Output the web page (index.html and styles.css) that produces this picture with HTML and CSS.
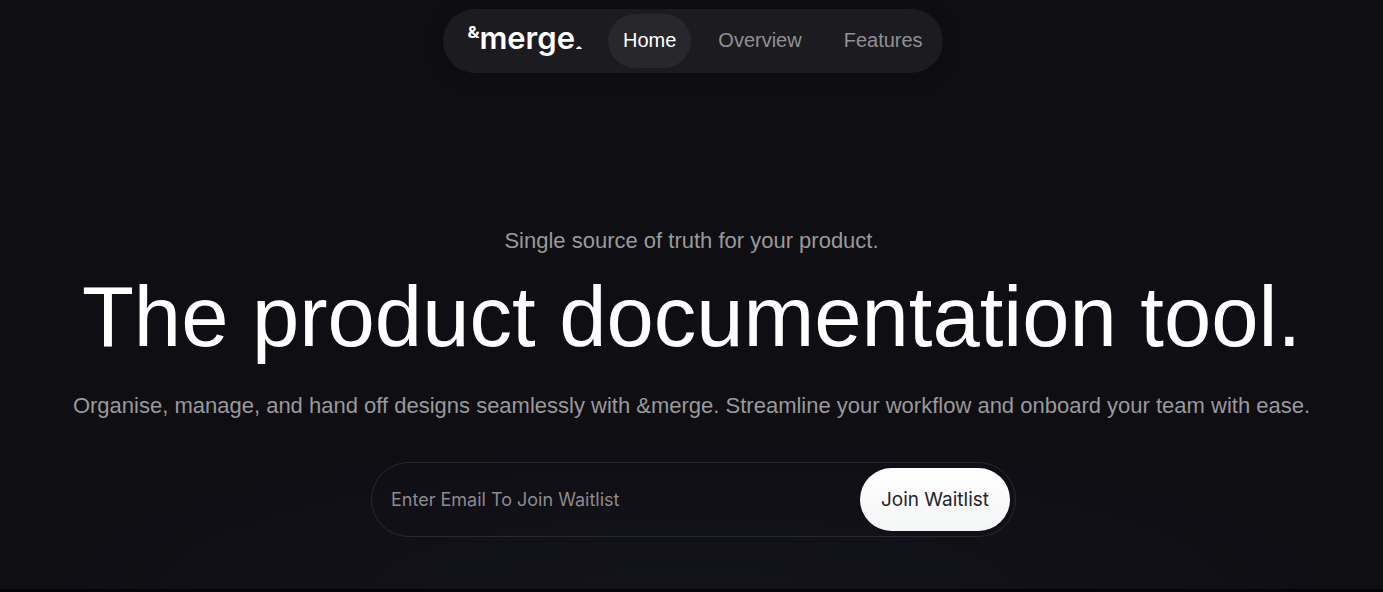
FILE: index.html
```html
<!DOCTYPE html>
<html lang="en">
<head>
<meta charset="utf-8">
<meta name="viewport" content="width=device-width, initial-scale=1">
<title>&amp;merge</title>
<link rel="stylesheet" href="styles.css">
</head>
<body>
<header class="header">
  <nav class="nav" aria-label="Main">
    <a class="logo" href="#" aria-label="&amp;merge home"><span class="logo-amp">&amp;</span><span class="logo-word">merge</span><svg class="logo-dot" viewBox="0 0 6 3" aria-hidden="true"><path d="M0 3V2.4L1.6 1Q3 -.4 4.4 1L6 2.4V3Z" fill="currentColor"/></svg></a>
    <a class="nav-link nav-link-active" href="#home" aria-current="page">Home</a>
    <a class="nav-link" href="#overview">Overview</a>
    <a class="nav-link" href="#features">Features</a>
  </nav>
</header>
<main class="hero">
  <p class="text">Single source of truth for your product.</p>
  <h1 class="title">The product documentation tool.</h1>
  <p class="text">Organise, manage, and hand off designs seamlessly with &amp;merge. Streamline your workflow and onboard your team with ease.</p>
  <form class="waitlist">
    <input class="email" type="email" placeholder="Enter Email To Join Waitlist" aria-label="Email">
    <button class="join" type="submit">Join Waitlist</button>
  </form>
</main>
</body>
</html>
```
FILE: styles.css
```css
* {
  box-sizing: border-box;
}

body {
  margin: 0;
  min-height: 100vh;
  background: radial-gradient(ellipse 50% 160px at 50% 100%, #13131c, #0f0e13) #0f0e13;
  border-bottom: 3px solid #08030b;
  font-family: "Liberation Sans", Arial, sans-serif;
  color: #fff;
}

.header {
  display: flex;
  justify-content: center;
  padding: 9px 0 0 3px;
}

.nav {
  display: flex;
  align-items: center;
  height: 64px;
  padding: 0 5px 0 24px;
  border-radius: 32px;
  background: #1c1b20;
  box-shadow: 0 4px 20px rgba(0, 0, 0, 0.2);
}

.logo {
  display: flex;
  align-items: center;
  margin-right: 26px;
  color: #fff;
  font-family: Inter, sans-serif;
  font-weight: 600;
  text-decoration: none;
}

.logo-amp {
  padding-bottom: 18px;
  font-family: "Open Sans", sans-serif;
  font-size: 16px;
  font-weight: 700;
  line-height: 16px;
}

.logo-word {
  padding-bottom: 6px;
  font-size: 31px;
  line-height: 32px;
}

.logo-dot {
  width: 6px;
  height: 3px;
  margin: 12px 0 0 1px;
}

.nav-link {
  display: flex;
  align-items: center;
  height: 54px;
  margin-right: 12px;
  padding: 0 15px 2px;
  border-radius: 27px;
  color: #929193;
  font-size: 20px;
  text-decoration: none;
}

.nav-link:last-child {
  margin-right: 0;
}

.nav-link-active {
  background: #28272c;
  color: #fff;
}

.hero {
  display: flex;
  flex-direction: column;
  align-items: center;
  padding: 152px 24px 24px;
  text-align: center;
}

.text {
  margin: 0;
  color: #9a999b;
  font-size: 22px;
  line-height: 32px;
}

.title {
  margin: 12px 0 25px;
  font-size: 85px;
  font-weight: 400;
  line-height: 96px;
}

.waitlist {
  display: flex;
  align-items: center;
  width: 100%;
  max-width: 645px;
  height: 75px;
  margin: 40px 0 0 4px;
  padding: 5px;
  border: 1px solid #29282d;
  border-radius: 38px;
}

.email {
  flex: 1;
  min-width: 0;
  padding: 0 14px;
  border: 0;
  outline: 0;
  background: none;
  color: #fff;
  font: 18px Inter, sans-serif;
}

.email::placeholder {
  color: #8c8b8e;
  opacity: 1;
}

.join {
  height: 63px;
  padding: 0 21px;
  border: 0;
  border-radius: 32px;
  background: linear-gradient(#fff, #f4f5f6);
  color: #25242a;
  font: 19px Inter, sans-serif;
}
```
